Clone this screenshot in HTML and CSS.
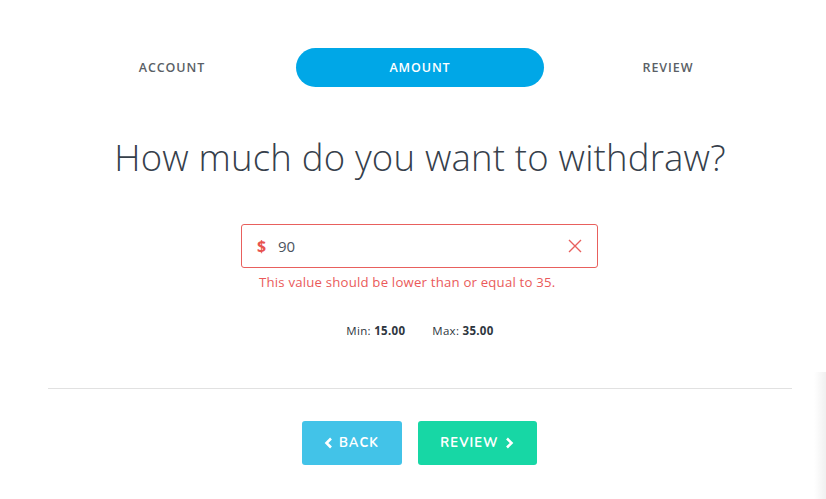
FILE: index.html
```html
<!DOCTYPE html>
<html>
<head>
<meta charset="utf-8">
<link rel="stylesheet" href="styles.css">
</head>
<body>
<div class="page">
  <nav class="steps">
    <div class="step">ACCOUNT</div>
    <div class="step active">AMOUNT</div>
    <div class="step">REVIEW</div>
  </nav>
  <h1 class="title">How much do you want to withdraw?</h1>
  <div class="field-wrap">
    <div class="field">
      <span class="currency">$</span>
      <span class="value">90</span>
      <svg class="clear" width="16" height="16" viewBox="0 0 16 16"><path d="M2 2L14 14M14 2L2 14" stroke="#e8605d" stroke-width="1.4" fill="none"/></svg>
    </div>
    <div class="error">This value should be lower than or equal to 35.</div>
  </div>
  <div class="limits">
    <span>Min: <b>15.00</b></span>
    <span>Max: <b>35.00</b></span>
  </div>
  <hr class="divider">
  <div class="actions">
    <button class="btn back"><svg width="9" height="12" viewBox="0 0 9 12"><path d="M7 1.5L2.5 6L7 10.5" stroke="#fff" stroke-width="2.6" fill="none"/></svg>BACK</button>
    <button class="btn next">REVIEW<svg width="9" height="12" viewBox="0 0 9 12"><path d="M2 1.5L6.5 6L2 10.5" stroke="#fff" stroke-width="2.6" fill="none"/></svg></button>
  </div>
</div>
<div class="edge"></div>
</body>
</html>
```
FILE: styles.css
```css
* { box-sizing: border-box; }
html, body { margin: 0; padding: 0; background: #fff; }
body { font-family: "Open Sans", "DejaVu Sans", sans-serif; color: #3a4350; overflow: hidden; height: 499px; }
.page { width: 744px; margin-left: 48px; padding-top: 48px; }
.steps { display: grid; grid-template-columns: repeat(3, 248px); }
.step { height: 39px; display: flex; align-items: center; justify-content: center; font-size: 12.5px; font-weight: 600; letter-spacing: 0.9px; color: #5a5f66; border-radius: 20px; }
.step.active { background: #00a7e7; color: #fff; }
.title { margin: 46px 0 0; text-align: center; font-weight: 300; font-size: 36.5px; line-height: 48px; color: #36404b; letter-spacing: 0.2px; }
.field-wrap { width: 357px; margin: 43px 0 0 193px; }
.field { height: 44px; border: 1px solid #e8605d; border-radius: 3px; display: flex; align-items: center; padding: 0 14px 0 15px; }
.currency { color: #e8534f; font-weight: 700; font-size: 16px; width: 21px; }
.value { font-size: 15px; color: #4c545e; flex: 1; }
.clear { display: block; }
.error { color: #ea5a5a; font-size: 13.2px; padding-left: 18px; margin-top: 5px; letter-spacing: 0.2px; }
.limits { display: flex; justify-content: center; gap: 27px; margin-top: 32px; font-size: 11.5px; color: #2e3640; letter-spacing: 0.3px; }
.limits b { font-weight: 700; }
.divider { border: 0; height: 1px; background: #e1e1e1; margin: 50px 0 0; }
.actions { display: flex; justify-content: center; gap: 16px; margin-top: 32px; padding-right: 2px; }
.btn { height: 44px; border: 0; border-radius: 3px; color: #fff; font-family: "Nunito", "Lato", sans-serif; font-weight: 700; font-size: 13px; letter-spacing: 1.1px; display: flex; align-items: center; justify-content: center; gap: 6px; }
.back { width: 100px; background: #42c3e8; }
.next { width: 119px; background: #17d7a5; }
.edge { position: absolute; right: 0; top: 372px; width: 12px; height: 127px; background: linear-gradient(to right, rgba(0,0,0,0), rgba(0,0,0,0.06)); }
```
